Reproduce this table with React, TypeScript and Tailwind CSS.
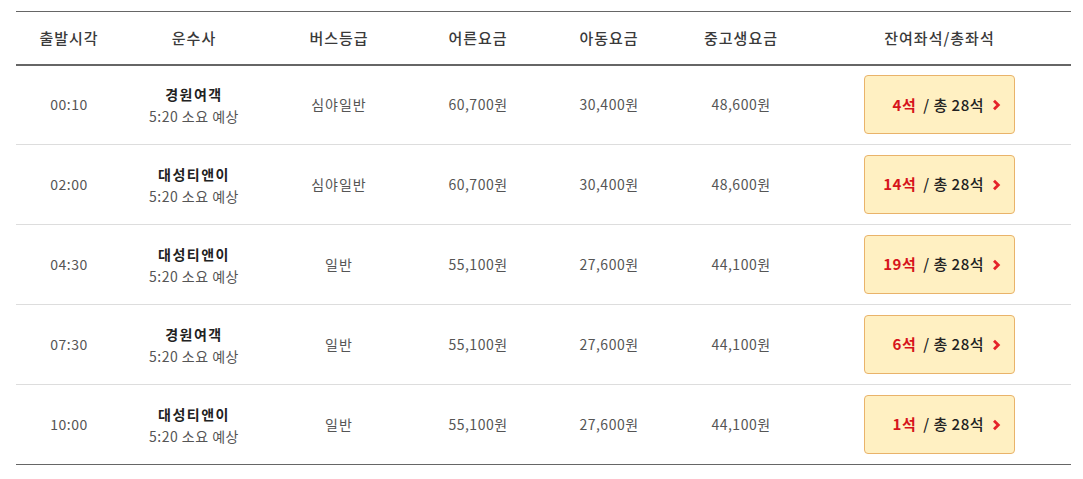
import React from 'react';

const rows = [
  { time: '00:10', company: '경원여객', grade: '심야일반', adult: '60,700원', child: '30,400원', teen: '48,600원', left: 4 },
  { time: '02:00', company: '대성티앤이', grade: '심야일반', adult: '60,700원', child: '30,400원', teen: '48,600원', left: 14 },
  { time: '04:30', company: '대성티앤이', grade: '일반', adult: '55,100원', child: '27,600원', teen: '44,100원', left: 19 },
  { time: '07:30', company: '경원여객', grade: '일반', adult: '55,100원', child: '27,600원', teen: '44,100원', left: 6 },
  { time: '10:00', company: '대성티앤이', grade: '일반', adult: '55,100원', child: '27,600원', teen: '44,100원', left: 1 },
];

const headers = ['출발시각', '운수사', '버스등급', '어른요금', '아동요금', '중고생요금', '잔여좌석/총좌석'];
const widths = ['w-[106px]', 'w-[144px]', 'w-[146px]', 'w-[132px]', 'w-[130px]', 'w-[134px]', 'w-[263px]'];

const Chevron = () => (
  <svg width="9" height="12" viewBox="0 0 9 12" className="ml-[8px]">
    <path d="M2 1.8 L6.3 6 L2 10.2" fill="none" stroke="#e5242a" strokeWidth="2.8" />
  </svg>
);

const App = () => {
  return (
    <div className="bg-white w-[1083px] h-[479px] pt-[11px] px-[16px] font-['Noto_Sans_CJK_KR',sans-serif]">
      <table className="w-[1055px] border-collapse table-fixed border-t border-b border-[#666]">
        <colgroup>
          {widths.map((w, i) => (
            <col key={i} className={w} />
          ))}
        </colgroup>
        <thead>
          <tr className="h-[53px] border-b-2 border-[#666]">
            {headers.map((h) => (
              <th key={h} className="text-[15px] font-medium text-[#3a3a3a] text-center p-0 leading-none tracking-[1px]">
                {h}
              </th>
            ))}
          </tr>
        </thead>
        <tbody>
          {rows.map((r, i) => (
            <tr key={i} className={`h-[80px] ${i < rows.length - 1 ? 'border-b border-[#ddd]' : ''}`}>
              <td className="text-center text-[14px] text-[#555] tracking-[0.5px]">{r.time}</td>
              <td className="text-center">
                <div className="text-[14px] font-bold text-[#222] leading-[22px] tracking-[1.5px]">{r.company}</div>
                <div className="text-[14px] text-[#555] leading-[22px] tracking-[0.5px]">5:20 소요 예상</div>
              </td>
              <td className="text-center text-[14px] text-[#555] tracking-[1px]">{r.grade}</td>
              <td className="text-center text-[14px] text-[#555] tracking-[0.5px]">{r.adult}</td>
              <td className="text-center text-[14px] text-[#555] tracking-[0.5px]">{r.child}</td>
              <td className="text-center text-[14px] text-[#555] tracking-[0.5px]">{r.teen}</td>
              <td>
                <button className="mx-auto flex items-center justify-end w-[151px] h-[59px] pr-[13px] bg-[#fff0c2] border border-[#e9b36a] rounded-[4px] text-[15px] text-[#222] font-medium tracking-[0.5px]">
                  <span className="text-[#d6141c] font-bold">{r.left}석</span>
                  <span className="ml-[7px]">/ 총 28석</span>
                  <Chevron />
                </button>
              </td>
            </tr>
          ))}
        </tbody>
      </table>
    </div>
  );
};

export default App;
